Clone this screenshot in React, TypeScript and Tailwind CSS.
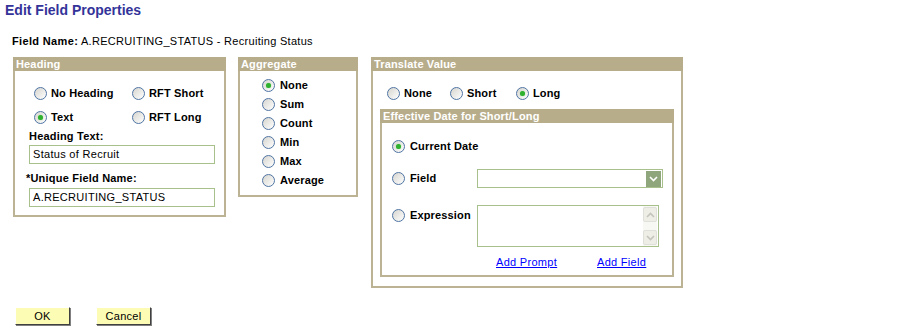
import React from "react";

const Radio: React.FC<{ checked?: boolean }> = ({ checked }) => (
  <span className="flex h-[13px] w-[13px] shrink-0 items-center justify-center rounded-full border border-[#4f74a3] bg-gradient-to-br from-[#d6d5cf] to-[#ffffff]">
    {checked && (
      <span className="h-[5px] w-[5px] rounded-full bg-[#2fb02f] shadow-[0_0_1px_#6fd66f]" />
    )}
  </span>
);

const Option: React.FC<{ label: string; checked?: boolean; className?: string }> = ({
  label,
  checked,
  className,
}) => (
  <label className={`flex h-[18px] items-center gap-[4px] font-bold tracking-[0.15px] ${className ?? ""}`}>
    <Radio checked={checked} />
    <span>{label}</span>
  </label>
);

const Box: React.FC<{
  title: string;
  className?: string;
  children: React.ReactNode;
}> = ({ title, className, children }) => (
  <div className={`flex shrink-0 flex-col border-x-2 border-b-2 border-[#bcb394] bg-white ${className ?? ""}`}>
    <div className="-mx-[2px] h-[14px] bg-[#b8ad8b] pl-[3px] font-bold leading-[14px] tracking-[0.15px] text-white">
      {title}
    </div>
    {children}
  </div>
);

const TextBox: React.FC<{ value: string; className?: string }> = ({ value, className }) => (
  <div className={`h-[19px] border border-[#a8c08c] bg-white pl-[3px] leading-[17px] tracking-[0.3px] ${className ?? ""}`}>
    {value}
  </div>
);

const Chevron: React.FC<{ up?: boolean; color: string }> = ({ up, color }) => (
  <svg width="9" height="6" viewBox="0 0 9 6">
    <path
      d={up ? "M1 5 L4.5 1.5 L8 5" : "M1 1 L4.5 4.5 L8 1"}
      fill="none"
      stroke={color}
      strokeWidth="1.6"
    />
  </svg>
);

const Button: React.FC<{ children: React.ReactNode }> = ({ children }) => (
  <button className="h-[18px] w-[55px] border border-t-white border-l-white border-r-[#404040] border-b-[#404040] bg-[#fcfcb4] text-[11px] leading-[16px] tracking-[0.3px] shadow-[1px_1px_0_#808080]">
    {children}
  </button>
);

export default function App() {
  return (
    <div className="h-[333px] w-[900px] overflow-hidden bg-white font-['Liberation_Sans',Arial,sans-serif] text-[11px] leading-[13px] text-black">
      <h1 className="pl-[5px] pt-[2px] text-[14px] font-bold leading-[16px] text-[#333399]">
        Edit Field Properties
      </h1>
      <div className="mt-[17px] pl-[12px] tracking-[0.3px]">
        <span className="font-bold tracking-[0.35px]">Field Name:</span> A.RECRUITING_STATUS - Recruiting Status
      </div>

      <div className="mt-[9px] flex items-start pl-[13px]">
        <Box title="Heading" className="h-[160px] w-[213px]">
          <div className="mt-[13px] grid grid-cols-[98px_1fr] gap-y-[6px] pl-[19px]">
            <Option label="No Heading" />
            <Option label="RFT Short" />
            <Option label="Text" checked />
            <Option label="RFT Long" />
          </div>
          <div className="mt-[4px] pl-[14px] font-bold tracking-[0.2px]">Heading Text:</div>
          <TextBox value="Status of Recruit" className="ml-[14px] mt-[2px] w-[186px]" />
          <div className="mt-[8px] pl-[11px] font-bold tracking-[0.2px]">*Unique Field Name:</div>
          <TextBox value="A.RECRUITING_STATUS" className="ml-[14px] mt-[3px] w-[186px]" />
        </Box>

        <Box title="Aggregate" className="ml-[12px] h-[140px] w-[120px]">
          <div className="flex flex-col pl-[22px] pt-[5px]">
            {["None", "Sum", "Count", "Min", "Max", "Average"].map((l, i) => (
              <Option key={l} label={l} checked={i === 0} className="h-[19px] gap-[5px]" />
            ))}
          </div>
        </Box>

        <Box title="Translate Value" className="ml-[13px] h-[231px] w-[312px]">
          <div className="mt-[13px] flex pl-[14px]">
            <Option label="None" className="w-[63px]" />
            <Option label="Short" className="w-[66px]" />
            <Option label="Long" checked />
          </div>
          <div className="ml-[7px] mt-[7px]">
            <Box title="Effective Date for Short/Long" className="h-[168px] w-[294px]">
              <div className="mt-[14px] pl-[10px]">
                <Option label="Current Date" checked className="gap-[5px]" />
              </div>
              <div className="mt-[14px] flex h-[19px] items-center pl-[10px]">
                <Option label="Field" className="w-[85px] gap-[5px]" />
                <div className="flex h-[19px] w-[186px] items-center justify-end border border-[#a8c08c] bg-white pr-[1px]">
                  <span className="flex h-[16px] w-[15px] items-center justify-center bg-[#8fa67c]">
                    <Chevron color="#ffffff" />
                  </span>
                </div>
              </div>
              <div className="mt-[17px] flex items-start pl-[10px]">
                <Option label="Expression" className="mt-[1px] w-[85px] gap-[5px]" />
                <div className="flex h-[42px] w-[182px] justify-end border border-[#a8c08c] bg-white pr-[1px]">
                  <div className="flex w-[14px] flex-col justify-between bg-[#f7f7f4] py-[1px]">
                    <span className="flex h-[15px] items-center justify-center rounded-[2px] border border-[#e0e0da] bg-[#eeede6]">
                      <Chevron up color="#c4c4bc" />
                    </span>
                    <span className="flex h-[15px] items-center justify-center rounded-[2px] border border-[#e0e0da] bg-[#eeede6]">
                      <Chevron color="#c4c4bc" />
                    </span>
                  </div>
                </div>
              </div>
              <div className="mt-[9px] flex pl-[114px] tracking-[0.3px] text-[#0000ff] underline">
                <a className="w-[101px]">Add Prompt</a>
                <a>Add Field</a>
              </div>
            </Box>
          </div>
        </Box>
      </div>

      <div className="mt-[19px] flex gap-[26px] pl-[15px]">
        <Button>OK</Button>
        <Button>Cancel</Button>
      </div>
    </div>
  );
}
